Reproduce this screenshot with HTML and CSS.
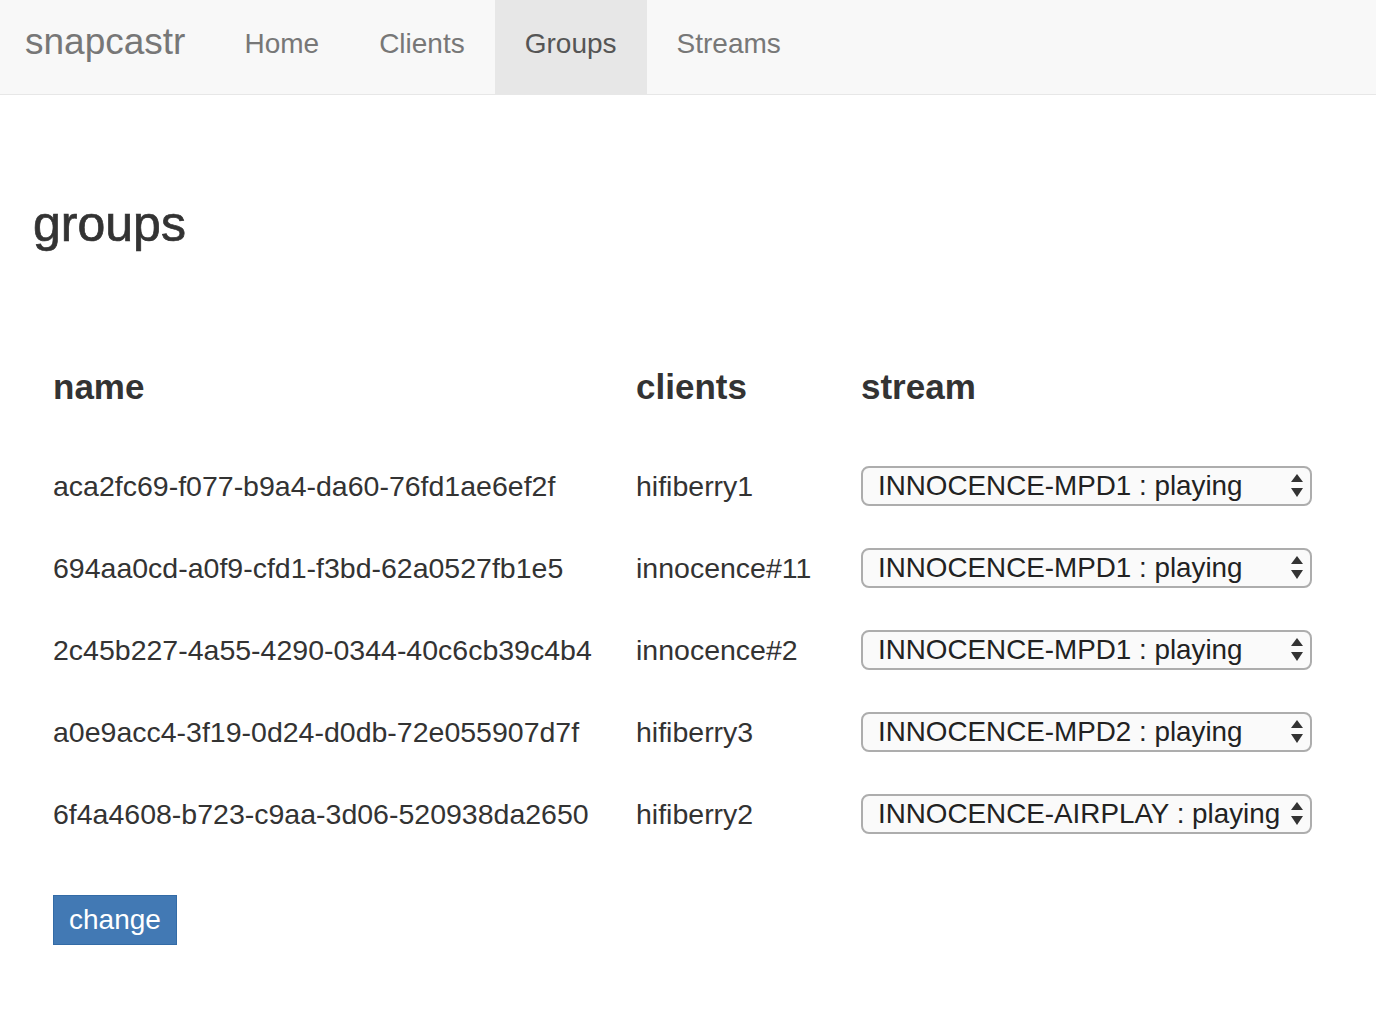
FILE: index.html
```html
<!DOCTYPE html>
<html lang="en">
<head>
<meta charset="utf-8">
<title>snapcastr - groups</title>
<link rel="stylesheet" href="styles.css">
</head>
<body>
<nav class="navbar">
  <a class="brand" href="#">snapcastr</a>
  <ul class="nav">
    <li><a href="#">Home</a></li>
    <li><a href="#">Clients</a></li>
    <li class="active"><a href="#">Groups</a></li>
    <li><a href="#">Streams</a></li>
  </ul>
</nav>
<main class="container">
  <h1 class="title">groups</h1>
  <form class="groups-form">
    <table class="groups">
      <colgroup>
        <col class="col-name">
        <col class="col-clients">
        <col class="col-stream">
      </colgroup>
      <thead>
        <tr><th>name</th><th>clients</th><th>stream</th></tr>
      </thead>
      <tbody>
        <tr>
          <td>aca2fc69-f077-b9a4-da60-76fd1ae6ef2f</td>
          <td>hifiberry1</td>
          <td class="stream-cell"><div class="select-wrap"><select class="stream-select"><option>INNOCENCE-MPD1 : playing</option><option>INNOCENCE-MPD2 : playing</option><option>INNOCENCE-AIRPLAY : playing</option></select><svg class="arrows" viewBox="0 0 12 24" width="12" height="24"><polygon points="6,0 12,8 0,8"/><polygon points="0,14 12,14 6,23"/></svg></div></td>
        </tr>
        <tr>
          <td>694aa0cd-a0f9-cfd1-f3bd-62a0527fb1e5</td>
          <td>innocence#11</td>
          <td class="stream-cell"><div class="select-wrap"><select class="stream-select"><option>INNOCENCE-MPD1 : playing</option><option>INNOCENCE-MPD2 : playing</option><option>INNOCENCE-AIRPLAY : playing</option></select><svg class="arrows" viewBox="0 0 12 24" width="12" height="24"><polygon points="6,0 12,8 0,8"/><polygon points="0,14 12,14 6,23"/></svg></div></td>
        </tr>
        <tr>
          <td>2c45b227-4a55-4290-0344-40c6cb39c4b4</td>
          <td>innocence#2</td>
          <td class="stream-cell"><div class="select-wrap"><select class="stream-select"><option>INNOCENCE-MPD1 : playing</option><option>INNOCENCE-MPD2 : playing</option><option>INNOCENCE-AIRPLAY : playing</option></select><svg class="arrows" viewBox="0 0 12 24" width="12" height="24"><polygon points="6,0 12,8 0,8"/><polygon points="0,14 12,14 6,23"/></svg></div></td>
        </tr>
        <tr>
          <td>a0e9acc4-3f19-0d24-d0db-72e055907d7f</td>
          <td>hifiberry3</td>
          <td class="stream-cell"><div class="select-wrap"><select class="stream-select"><option>INNOCENCE-MPD1 : playing</option><option selected>INNOCENCE-MPD2 : playing</option><option>INNOCENCE-AIRPLAY : playing</option></select><svg class="arrows" viewBox="0 0 12 24" width="12" height="24"><polygon points="6,0 12,8 0,8"/><polygon points="0,14 12,14 6,23"/></svg></div></td>
        </tr>
        <tr>
          <td>6f4a4608-b723-c9aa-3d06-520938da2650</td>
          <td>hifiberry2</td>
          <td class="stream-cell"><div class="select-wrap"><select class="stream-select"><option>INNOCENCE-MPD1 : playing</option><option>INNOCENCE-MPD2 : playing</option><option selected>INNOCENCE-AIRPLAY : playing</option></select><svg class="arrows" viewBox="0 0 12 24" width="12" height="24"><polygon points="6,0 12,8 0,8"/><polygon points="0,14 12,14 6,23"/></svg></div></td>
        </tr>
      </tbody>
    </table>
    <button class="btn" type="button">change</button>
  </form>
</main>
</body>
</html>
```

FILE: styles.css
```css
* { box-sizing: border-box; }

html, body {
  margin: 0;
  padding: 0;
  background: #fff;
}

body {
  font-family: "Liberation Sans", Helvetica, Arial, sans-serif;
  color: #333;
}

/* navbar */
.navbar {
  display: flex;
  align-items: flex-start;
  height: 95px;
  background: #f8f8f8;
  border-bottom: 1px solid #e7e7e7;
}

.brand {
  display: block;
  height: 94px;
  padding: 22px 29px 0 25px;
  font-size: 37px;
  line-height: 40px;
  color: #777;
  text-decoration: none;
}

.nav {
  display: flex;
  margin: 0;
  padding: 0;
  list-style: none;
}

.nav a {
  display: block;
  height: 94px;
  padding: 24px 30px 0;
  font-size: 28px;
  line-height: 40px;
  color: #777;
  text-decoration: none;
}

.nav .active a {
  background: #e7e7e7;
  color: #555;
}

/* content */
.container {
  padding: 0 31px 0 33px;
}

.title {
  margin: 99px 0 0;
  font-size: 50px;
  line-height: 60px;
  font-weight: normal;
  -webkit-text-stroke: 0.7px #333;
  color: #333;
}

.groups-form {
  margin: 75px 0 0;
}

.groups {
  border-collapse: collapse;
  table-layout: fixed;
  width: 1299px;
}

.col-name { width: 583px; }
.col-clients { width: 225px; }
.col-stream { width: 491px; }

.groups th {
  height: 116px;
  padding: 0 20px;
  font-size: 35px;
  line-height: 40px;
  font-weight: bold;
  text-align: left;
  vertical-align: middle;
  color: #333;
}

.groups td {
  height: 82px;
  padding: 0 20px;
  font-size: 28.5px;
  line-height: 34px;
  vertical-align: middle;
  white-space: nowrap;
  color: #333;
}

.groups td.stream-cell {
  padding-top: 0;
}

.select-wrap {
  position: relative;
  width: 451px;
  height: 40px;
}

.stream-select {
  -webkit-appearance: none;
  appearance: none;
  display: block;
  width: 451px;
  height: 40px;
  margin: 0;
  padding: 0 28px 0 15px;
  font-family: "Liberation Sans", Helvetica, Arial, sans-serif;
  font-size: 27.8px;
  line-height: 36px;
  color: #222;
  background: #fafafa;
  border: 2px solid #adadad;
  border-radius: 8px;
}

.arrows {
  position: absolute;
  right: 9px;
  top: 8px;
  fill: #333;
  pointer-events: none;
}

.btn {
  display: block;
  margin: 40px 0 0 20px;
  height: 50px;
  padding: 0 15px;
  font-family: "Liberation Sans", Helvetica, Arial, sans-serif;
  font-size: 28px;
  line-height: 48px;
  color: #fff;
  background: #4279b4;
  border: 1px solid #336ba6;
  border-radius: 0;
}
```
